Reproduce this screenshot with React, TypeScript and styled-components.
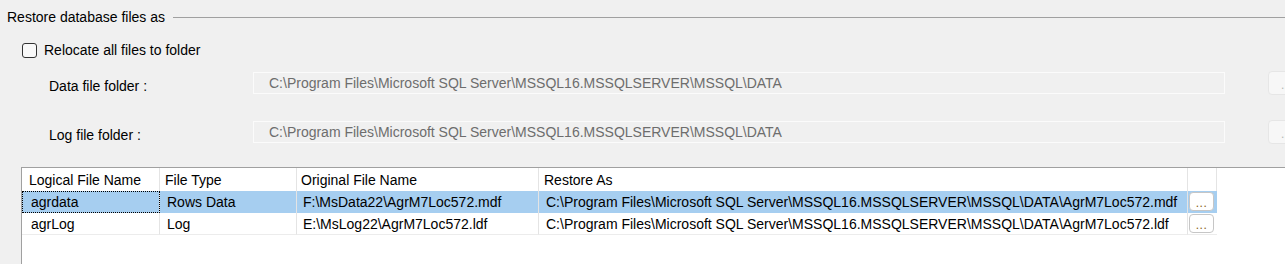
import { FC } from "react";
import styled, { createGlobalStyle } from "styled-components";

const GlobalStyle = createGlobalStyle`
    html, body {
        margin: 0;
        padding: 0;
        background: #f0f0f0;
        overflow: hidden;
    }
    body {
        font-family: "Liberation Sans", Arial, sans-serif;
        font-size: 14px;
        color: #000;
    }
`

const Page = styled.div`
    width: 1285px;
    height: 264px;
    display: flex;
    flex-direction: column;
    overflow: hidden;
`

const GroupTitle = styled.div`
    height: 34px;
    display: flex;
    align-items: center;
    gap: 8px;
    padding-left: 7px;

    span {
        white-space: nowrap;
    }

    &::after {
        content: "";
        flex: 1;
        height: 1px;
        background: #a0a0a0;
    }
`

const CheckRow = styled.label`
    height: 32px;
    display: flex;
    align-items: center;
    gap: 7px;
    padding-left: 22px;
`

const CheckBox = styled.span`
    width: 13px;
    height: 13px;
    border: 1px solid #333;
    border-radius: 3px;
    background: #f9f9f9;
`

const FolderRow = styled.div<{ $top: number }>`
    height: 24px;
    margin-top: ${({ $top }) => $top}px;
    display: flex;
    align-items: center;
    padding-left: 49px;

    & > * {
        flex: none;
    }
`

const FolderLabel = styled.span`
    width: 204px;
    padding-top: 5px;
    white-space: nowrap;
`

const FolderBox = styled.div`
    box-sizing: border-box;
    width: 972px;
    height: 22px;
    border: 1px solid #fbfbfb;
    background: #f0f0f0;
    color: #6d6d6d;
    padding-left: 15px;
    display: flex;
    align-items: center;
    white-space: nowrap;
`

const BrowseBtn = styled.div`
    box-sizing: border-box;
    width: 36px;
    height: 24px;
    margin-left: 43px;
    border: 1px solid #e6e6e6;
    border-radius: 4px;
    background: #f7f7f7;
    color: #b5b5b5;
    display: flex;
    align-items: center;
    justify-content: center;
    font-size: 12px;
    padding-top: 4px;
`

const Grid = styled.div`
    flex: 1;
    margin-top: 23px;
    margin-left: 21px;
    border-top: 1px solid #a0a0a0;
    border-left: 1px solid #a0a0a0;
    background: #fff;
`

const GridRow = styled.div<{ $selected?: boolean; $header?: boolean }>`
    display: grid;
    grid-template-columns: 138px 137px 242px 649px 29px;
    height: ${({ $header }) => ($header ? 23 : 22)}px;
    width: max-content;
    background: ${({ $selected }) => ($selected ? "#a6cef0" : "transparent")};
`

const Cell = styled.div<{ $pad: number; $focus?: boolean; $line?: boolean }>`
    box-sizing: border-box;
    display: flex;
    align-items: center;
    padding-left: ${({ $pad }) => $pad}px;
    border-right: 1px solid #e4e4e4;
    border-bottom: ${({ $line }) => ($line ? "1px solid #ececec" : "none")};
    outline: ${({ $focus }) => ($focus ? "1px dotted #000" : "none")};
    outline-offset: -1px;
    white-space: nowrap;
    overflow: hidden;
`

const ButtonCell = styled.div<{ $line?: boolean }>`
    box-sizing: border-box;
    padding: 1px 3px 1px 1px;
    border-bottom: ${({ $line }) => ($line ? "1px solid #ececec" : "none")};
`

const EllipsisBtn = styled.div`
    box-sizing: border-box;
    width: 25px;
    height: 19px;
    border: 1px solid #c6c6c6;
    border-radius: 4px;
    background: #fff;
    color: #8a5c14;
    font-size: 12px;
    display: flex;
    align-items: center;
    justify-content: center;
    padding-top: 3px;
    letter-spacing: 0.5px;
`

interface IFileRow {
    logical: string,
    type: string,
    original: string,
    restoreAs: string
}

const dataPath = "C:\\Program Files\\Microsoft SQL Server\\MSSQL16.MSSQLSERVER\\MSSQL\\DATA";

const files: IFileRow[] = [
    { logical: "agrdata", type: "Rows Data", original: "F:\\MsData22\\AgrM7Loc572.mdf", restoreAs: dataPath + "\\AgrM7Loc572.mdf" },
    { logical: "agrLog", type: "Log", original: "E:\\MsLog22\\AgrM7Loc572.ldf", restoreAs: dataPath + "\\AgrM7Loc572.ldf" },
];

const App: FC = () => {
    return (
        <Page>
            <GlobalStyle />
            <GroupTitle><span>Restore database files as</span></GroupTitle>
            <CheckRow>
                <CheckBox />
                <span>Relocate all files to folder</span>
            </CheckRow>
            <FolderRow $top={5}>
                <FolderLabel>Data file folder :</FolderLabel>
                <FolderBox>{dataPath}</FolderBox>
                <BrowseBtn>...</BrowseBtn>
            </FolderRow>
            <FolderRow $top={25}>
                <FolderLabel>Log file folder :</FolderLabel>
                <FolderBox>{dataPath}</FolderBox>
                <BrowseBtn>...</BrowseBtn>
            </FolderRow>
            <Grid>
                <GridRow $header>
                    <Cell $pad={7}>Logical File Name</Cell>
                    <Cell $pad={5}>File Type</Cell>
                    <Cell $pad={4}>Original File Name</Cell>
                    <Cell $pad={5}>Restore As</Cell>
                    <Cell $pad={0} />
                </GridRow>
                {files.map((f, i) => (
                    <GridRow key={f.logical} $selected={i === 0}>
                        <Cell $pad={9} $focus={i === 0} $line={i > 0}>{f.logical}</Cell>
                        <Cell $pad={7} $line={i > 0}>{f.type}</Cell>
                        <Cell $pad={6} $line={i > 0}>{f.original}</Cell>
                        <Cell $pad={7} $line={i > 0}>{f.restoreAs}</Cell>
                        <ButtonCell $line={i > 0}><EllipsisBtn>...</EllipsisBtn></ButtonCell>
                    </GridRow>
                ))}
            </Grid>
        </Page>
    )
}

export default App;
